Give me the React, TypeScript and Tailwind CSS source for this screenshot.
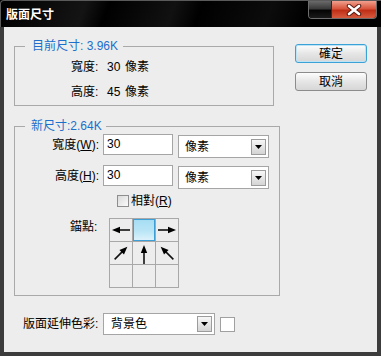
import React from "react";

const font = "font-['Liberation_Sans','Noto_Sans_CJK_TC',sans-serif]";

function Select({ value, width, textPl }: { value: string; width: string; textPl: string }) {
  return (
    <div className={`flex h-full items-center justify-between border border-[#a5a5a5] bg-white ${width}`}>
      <span className={`${textPl} text-[12px] leading-[16px] text-black`}>{value}</span>
      <div className="mr-[2px] flex h-[16px] w-[15px] items-center justify-center border border-[#9c9c9c] bg-[linear-gradient(#f7f7f7,#d4d4d4)]">
        <svg width="7" height="4" viewBox="0 0 7 4">
          <polygon points="0,0 7,0 3.5,4" fill="#000" />
        </svg>
      </div>
    </div>
  );
}

function Arrow({ dir }: { dir: string }) {
  const rot: Record<string, number> = { left: 180, right: 0, ur: -45, up: -90, ul: -135 };
  const len = dir === "up" ? 11 : 9;
  return (
    <svg width="22" height="22" viewBox="0 0 22 22">
      <g transform={`translate(11 ${dir === "up" ? 12 : 11}) rotate(${rot[dir]})`}>
        <line x1={-len} y1="0" x2="4" y2="0" stroke="#111" strokeWidth="1.6" />
        <polygon points="9,0 1,-3.2 1,3.2" fill="#000" />
      </g>
    </svg>
  );
}

function AnchorGrid() {
  const cells = ["left", "sel", "right", "ur", "up", "ul", "", "", ""];
  return (
    <div className="grid grid-cols-[22px_22px_22px] gap-px bg-[#a8a8a8] p-px">
      {cells.map((c, i) => (
        <div
          key={i}
          className={
            c === "sel"
              ? "h-[22px] border border-[#3e9ed6] bg-[linear-gradient(#a6ddf3_0%,#b9e5f6_55%,#dcf2fb_100%)]"
              : "flex h-[22px] items-center justify-center bg-[#ededed]"
          }
        >
          {c && c !== "sel" ? <Arrow dir={c} /> : null}
        </div>
      ))}
    </div>
  );
}

export default function App() {
  return (
    <div className={`flex h-[356px] w-[381px] flex-col bg-black ${font}`}>
      {/* title bar */}
      <div className="flex h-[27px] shrink-0 justify-between rounded-tl-[4px] border-l border-t border-[#5a5a5a] bg-[linear-gradient(110deg,#000_0%,#141414_22%,#000_28%,#111_45%,#000_52%,#0c0c0c_70%,#000_80%)]">
        <div className="self-center pl-[5px] pt-[1px] text-[12px] font-bold leading-[16px] text-white">
          版面尺寸
        </div>
        <div className="mr-[4px] flex h-[18px] self-start overflow-hidden rounded-b-[4px] border border-t-0 border-[#6e6e6e]">
          <div className="w-[23px] border-r border-[#2a2a2a] bg-[linear-gradient(#6a6a6a,#3a3a3a_45%,#050505_55%,#1a1a1a)]" />
          <div className="flex w-[44px] items-center justify-center bg-[linear-gradient(#f0a08e,#d8553c_45%,#bf2f17_55%,#d65a3e)]">
            <svg width="18" height="12" viewBox="0 0 18 12">
              <path d="M4 2 L14 10 M14 2 L4 10" stroke="#5a1a10" strokeWidth="4.5" strokeLinecap="round" />
              <path d="M4 2 L14 10 M14 2 L4 10" stroke="#fff" strokeWidth="2.6" strokeLinecap="round" />
            </svg>
          </div>
        </div>
      </div>

      {/* body */}
      <div className="flex flex-1 flex-col border-x-[4px] border-b-[4px] border-[#3c3c3c] bg-[#ededed] pl-[10px] pt-[11px] text-[12px] leading-[16px] text-black">
        <div className="flex">
          <div className="flex w-[260px] flex-col">
            <fieldset className="h-[68px] border border-[#a9a9a9] px-[10px]">
              <legend className="pl-[7px] pr-[5px] text-[#1c6fcb]">目前尺寸: 3.96K</legend>
              <div className="ml-[46px] mt-[5px] flex">
                <span className="w-[36px]">寬度:</span>
                <span className="w-[18px]">30</span>
                <span>像素</span>
              </div>
              <div className="ml-[46px] mt-[9px] flex">
                <span className="w-[36px]">高度:</span>
                <span className="w-[18px]">45</span>
                <span>像素</span>
              </div>
            </fieldset>

            <fieldset className="mt-[12px] h-[178px] border border-[#a9a9a9] px-[10px]">
              <legend className="pl-[6px] pr-[4px] text-[#1c6fcb]">新尺寸:2.64K</legend>
              <div className="flex h-[24px] items-start">
                <span className="mt-[3px] w-[78px] whitespace-nowrap pr-[4px] text-right">
                  寬度(<span className="underline">W</span>):
                </span>
                <div className="h-[21px] w-[70px] border border-[#a5a5a5] bg-white pl-[3px] leading-[19px]">30</div>
                <div className="ml-[5px] mt-[1px] h-[23px]">
                  <Select value="像素" width="w-[91px]" textPl="pl-[6px]" />
                </div>
              </div>
              <div className="mt-[7px] flex h-[24px] items-start">
                <span className="mt-[3px] w-[78px] whitespace-nowrap pr-[4px] text-right">
                  高度(<span className="underline">H</span>):
                </span>
                <div className="h-[21px] w-[70px] border border-[#a5a5a5] bg-white pl-[3px] leading-[19px]">30</div>
                <div className="ml-[5px] mt-[1px] h-[23px]">
                  <Select value="像素" width="w-[91px]" textPl="pl-[6px]" />
                </div>
              </div>
              <div className="ml-[92px] mt-[4px] flex items-center">
                <div className="h-[12px] w-[12px] border border-[#8e8e8e] bg-[linear-gradient(135deg,#dadada,#fafafa)]" />
                <span className="ml-[2px]">
                  相對(<span className="underline">R</span>)
                </span>
              </div>
              <div className="ml-[45px] mt-[9px] flex items-start">
                <span className="mt-[1px] w-[39px]">錨點:</span>
                <AnchorGrid />
              </div>
            </fieldset>
          </div>

          <div className="ml-[21px] flex flex-col pt-[6px]">
            <button className="h-[19px] w-[72px] rounded-[3px] border border-[#3aa2d6] bg-[linear-gradient(#fdfdfd,#e6e6e6_50%,#d6d6d6)] text-[12px] leading-[16px] text-black shadow-[inset_0_0_0_1px_#bde3f5]">
              確定
            </button>
            <button className="mt-[9px] h-[19px] w-[72px] rounded-[3px] border border-[#8c8c8c] bg-[linear-gradient(#fdfdfd,#e6e6e6_50%,#d6d6d6)] text-[12px] leading-[16px] text-black">
              取消
            </button>
          </div>
        </div>

        <div className="ml-[9px] mt-[17px] flex h-[22px] items-center">
          <span className="w-[80px] whitespace-nowrap">版面延伸色彩:</span>
          <div className="h-[22px]">
            <Select value="背景色" width="w-[112px]" textPl="pl-[7px]" />
          </div>
          <div className="ml-[5px] h-[15px] w-[15px] border border-[#a0a0a0] bg-white" />
        </div>
      </div>
    </div>
  );
}
